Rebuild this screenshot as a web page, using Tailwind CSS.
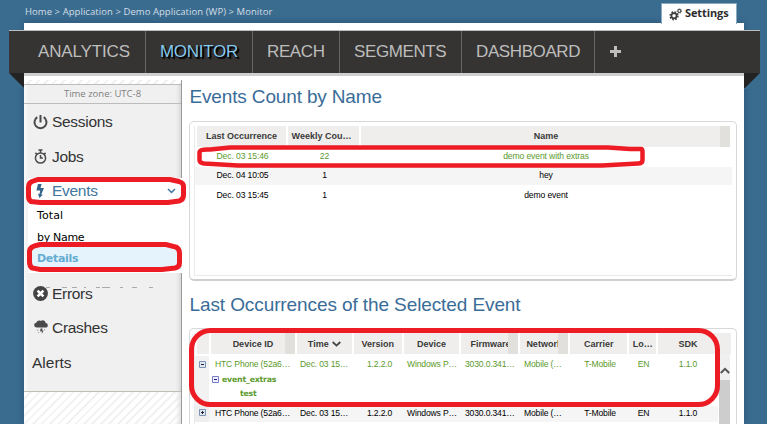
<!DOCTYPE html>
<html lang="en">
<head>
<meta charset="utf-8">
<title>Monitor</title>
<script src="https://cdn.jsdelivr.net/npm/@tailwindcss/browser@4"></script>
</head>
<body class="w-[767px] h-[424px] overflow-hidden bg-[#3a6c90] font-['Liberation_Sans',Arial,sans-serif]">
<div class="relative w-[767px] h-[424px] overflow-hidden flex flex-col">
  <header class="h-[23px] shrink-0 flex justify-between pl-[25px] pr-[30px]">
    <nav class="pt-[6px] h-[22px] text-[9.5px] leading-[12px] tracking-[0.06px] text-[#d3dde5] whitespace-nowrap font-['Open_Sans',sans-serif]">Home &gt; Application &gt; Demo Application (WP) &gt; Monitor</nav>
    <div class="relative z-10 mt-[3px] h-[21px] w-[76px] bg-white border border-b-0 border-[#8ba9bf] flex items-center pl-[7px] gap-[3px]">
      <svg class="w-[13px] h-[13px]" viewBox="0 0 13 13" fill="none" stroke="#3c3c3c"><circle cx="5" cy="7.8" r="2.6" stroke-width="1.7"/><circle cx="5" cy="7.8" r="3.9" stroke-width="1.5" stroke-dasharray="1.6 1.46"/><circle cx="10.4" cy="3" r="1.5" stroke-width="1.1"/><circle cx="10.4" cy="3" r="2.2" stroke-width=".8" stroke-dasharray=".9 .83"/></svg>
      <span class="text-[11px] leading-[14px] pb-[2px] font-bold text-[#2c2c2c] font-['Open_Sans',sans-serif] tracking-[-0.1px]">Settings</span>
    </div>
  </header>
  <main class="mx-[24px] w-[720px] h-[401px] bg-white flex flex-col shadow-[0_0_7px_rgba(20,50,80,0.45)]">
    <nav class="relative mt-[7px] -ml-[15px] w-[751px] h-[46px] shrink-0 bg-[#363432] border-t border-t-[#bdbdbd] flex text-[17px] leading-[20px] text-[#bdbdbd] whitespace-nowrap">
      <div class="w-[137px] border-r border-[#666] pl-[29px] pt-[11px] tracking-[-0.15px]">ANALYTICS</div>
      <div class="w-[107px] border-r border-[#666] pl-[14px] pt-[11px] text-[#86c9ee] tracking-[-0.3px] [text-shadow:1px_1px_1px_#000,2px_2px_1px_#000]">MONITOR</div>
      <div class="w-[87px] border-r border-[#666] pl-[14px] pt-[11px] tracking-[-0.4px]">REACH</div>
      <div class="w-[122px] border-r border-[#666] pl-[14px] pt-[11px] tracking-[-0.4px]">SEGMENTS</div>
      <div class="w-[133px] border-r border-[#666] pl-[14px] pt-[11px] tracking-[-0.4px]">DASHBOARD</div>
      <svg class="ml-[15px] mt-[15px] w-[11px] h-[11px]" viewBox="0 0 11 11"><path d="M0 5.5h11M5.500 0v11" stroke="#bdbdbd" stroke-width="3"/></svg>
      <div class="absolute left-[15px] top-[42px] w-[720px] h-[3px] bg-[#cfcfcf]"></div>
      <svg class="absolute left-0 top-[42px] w-[15px] h-[15px]" viewBox="0 0 15 15"><path d="M0 0h15v15H0z" fill="#3a6c90"/><path d="M0 0h15v15z" fill="#232323"/></svg>
      <svg class="absolute left-[735px] top-[42px] w-[16px] h-[16px]" viewBox="0 0 16 16"><path d="M0 0h16v16H0z" fill="#3a6c90"/><path d="M0 0h16L1 15H0z" fill="#232323"/></svg>
    </nav>
    <div class="flex h-[348px]">
      <aside class="mt-[4px] w-[158px] h-[344px] shrink-0 border-r border-[#999] bg-[#f0f0f0] text-[15.5px] leading-[18px] tracking-[-0.3px] text-[#333] shadow-[inset_4px_0_5px_-3px_#fff,inset_-4px_0_5px_-3px_#ccc] relative">
        <div class="h-[4px] bg-[repeating-linear-gradient(135deg,#fff_0_4px,#f0f0f0_4px_6px)]"></div>
        <div class="h-[20px] border-y border-[#bcbcbc] text-center text-[9.5px] leading-[17px] text-[#808080] tracking-[0px] font-['Open_Sans',sans-serif]">Time zone: UTC-8</div>
        <div class="flex items-center h-[36px] pl-[9px] gap-[4px]">
          <svg class="w-[15px] h-[16px]" viewBox="0 0 15 16" fill="none" stroke="#4a4a4a" stroke-width="2"><path d="M4.300 3.200a6 6 0 1 0 6.400 0M7.500 1v7.500"/></svg><span>Sessions</span></div>
        <div class="flex items-center h-[33px] pl-[10px] gap-[5px]">
          <svg class="w-[13px] h-[15px]" viewBox="0 0 13 15" fill="none" stroke="#4a4a4a" stroke-width="1.500"><circle cx="6.500" cy="9" r="5.100"/><path d="M6.500 6v3h2.400M4.500 .9h4M6.500 1v3M1.400 3.900l1.600 1.500M11.600 3.900l-1.500 1.500"/></svg><span>Jobs</span></div>
        <div class="relative -mr-px mt-[5px] ml-[4px] h-[95px] bg-white">
          <div class="flex items-center h-[25px] pl-[8px] text-[#4176a0]">
            <svg class="w-[8px] h-[14px] mr-[8px]" viewBox="0 0 8 14" fill="#34658b"><path d="M2 0h3.600L4.500 4H8L5.200 10.500l1.700.2L3.400 14 2 9.600l1.500.5L4.200 6.600H.4z"/></svg><span>Events</span>
            <svg class="ml-auto mr-[6px] w-[9px] h-[6px]" viewBox="0 0 9 6" fill="none" stroke="#4176a0" stroke-width="1.500"><path d="M1 1l3.500 3.500L8 1"/></svg></div>
          <div class="pl-[9px] pt-px text-[11px] leading-[24px] text-black font-['DejaVu_Sans',Verdana,sans-serif]">
            <div class="h-[22px] tracking-[0.1px]">Total</div>
            <div class="h-[21px] tracking-[-0.3px]">by Name</div>
            <div class="-ml-[9px] pl-[9px] h-[22px] leading-[23px] bg-[#e4f3fc] text-[#63acd3] font-bold tracking-[-0.3px]">Details</div>
          </div>
        </div>
        <div class="flex items-center h-[41px] pl-[9px] gap-[4px]">
          <svg class="w-[15px] h-[15px]" viewBox="0 0 15 15"><circle cx="7.500" cy="7.500" r="7.400" fill="#444"/><path d="M4.600 4.600l5.800 5.800m0-5.800l-5.800 5.800" stroke="#fff" stroke-width="2.600"/></svg><span>Errors</span></div>
        <div class="flex items-center h-[27px] pl-[10px] gap-[4px]">
          <svg class="w-[14px] h-[15px]" viewBox="0 0 14 15" fill="#4a4a4a"><path d="M3 7.500C-.8 7.500-.5 3 2.300 2.800 3 .8 5 .2 6.800.900 9-.5 11.500 1 11.600 3c3 .4 2.800 4.500.2 4.500z"/><path d="M6.500 8.500h2l-.3 2h1.300l-1.700 3.500.2-2.400H6.200zM3.500 9.500l1 .4-.8 1.200zM10 9l1 .4-.5 1zM4.500 12l.8.3-.6 1.200z"/></svg><span>Crashes</span></div>
        <div class="flex items-center h-[43px] pl-[8px]"><span class="tracking-[0px]">Alerts</span></div>
        <div class="mt-[7px] h-[33px] border-t border-[#bfbfb5] bg-[repeating-linear-gradient(135deg,#fff_0_4px,#f2f2f2_4px_6px)] shadow-[inset_-5px_0_5px_-3px_#ddd]"></div>
        <svg class="absolute left-[22px] top-[207px] w-[112px] h-[2px]" viewBox="0 0 112 2"><path d="M0 .5h4M16 .5h5M26 .5h5M38 .5h2M50 .5h4M56 .5h8M74 .5h3M86 .5h5M103 .5h4" stroke="#aaa"/></svg>
      </aside>
      <section class="pl-[7px] flex flex-col text-[8.6px] leading-[10px]">
        <h1 class="h-[45px] shrink-0 pt-[10px] pl-[0.5px] text-[19px] leading-[22px] text-[#3a6c98] tracking-[-0.15px] whitespace-nowrap">Events Count by Name</h1>
        <div class="w-[548px] h-[160px] shrink-0 rounded-[5px] border border-b-2 border-[#d8d8d8] border-b-[#cfcfcf] pt-[4px] px-[4px] pb-[3px]">
          <div class="h-full border-l border-b border-[#ebebeb] text-center">
            <div class="ml-[2px] flex gap-[2px] h-[21px] text-[9px] leading-[20px] font-bold text-[#3a3a3a] whitespace-nowrap">
              <div class="w-[89px] bg-[#efeeec]">Last Occurrence</div><div class="w-[71px] bg-[#efeeec] pr-[4px]">Weekly Cou…</div><div class="w-[369px] bg-[#efeeec] border-r-10 border-[#e1e0dc]"><span class="ml-[11px]">Name</span></div>
            </div>
            <div class="grid grid-cols-[95px_69px_374px] h-[20px] leading-[19px] text-[#5c9a2c] tracking-[-0.12px]"><span>Dec. 03 15:46</span><span>22</span><span>demo event with extras</span></div>
            <div class="grid grid-cols-[95px_69px_374px] h-[18px] leading-[17px] bg-[#f5f5f5] tracking-[-0.12px]"><span>Dec. 04 10:05</span><span>1</span><span>hey</span></div>
            <div class="grid grid-cols-[95px_69px_374px] h-[20px] leading-[20px] tracking-[-0.12px]"><span>Dec. 03 15:45</span><span>1</span><span>demo event</span></div>
          </div>
        </div>
        <h1 class="h-[47px] shrink-0 pt-[13px] pl-[0.5px] text-[19px] leading-[22px] text-[#3a6c98] tracking-[-0.1px] whitespace-nowrap">Last Occurrences of the Selected Event</h1>
        <div class="w-[548px] h-[110px] shrink-0 rounded-t-[5px] border border-b-0 border-[#d8d8d8] pt-[4px] px-[4px] flex">
          <div class="w-[524px] border-l border-[#ebebeb] whitespace-nowrap">
            <div class="ml-[2px] flex gap-[2px] h-[21px] text-[9px] leading-[22px] font-bold text-[#3a3a3a] text-center">
              <div class="w-[12px] bg-[#efeeec]"></div>
              <div class="w-[84px] bg-[#efeeec] border-r-10 border-[#e1e0dc]"><span class="ml-[10px]">Device ID</span></div>
              <div class="w-[55px] bg-[#efeeec] flex items-center justify-center gap-[3px]"><span>Time</span><svg class="w-[9px] h-[6px]" viewBox="0 0 9 6" fill="none" stroke="#444" stroke-width="1.800"><path d="M.7 1l3.800 3.600L8.300 1"/></svg></div>
              <div class="w-[48px] bg-[#efeeec]">Version</div>
              <div class="w-[56px] bg-[#efeeec]">Device</div>
              <div class="w-[57px] bg-[#efeeec] border-r-10 border-[#e1e0dc] text-left pl-[9px] overflow-hidden">Firmware</div>
              <div class="w-[48px] bg-[#efeeec] border-r-10 border-[#e1e0dc] text-left pl-[6px] overflow-hidden">Network</div>
              <div class="w-[57px] bg-[#efeeec]">Carrier</div>
              <div class="w-[27px] bg-[#efeeec]">Lo…</div>
              <div class="w-[60px] bg-[#efeeec]">SDK</div>
            </div>
            <div class="flex mt-[2px] h-[50px]">
              <div class="w-[15px] bg-[#f2f2f2] pt-[5px] pl-[4px]"><svg class="w-[7px] h-[7px]" viewBox="0 0 7 7"><path d="M.5.5h6v6h-6z" fill="#dfe7f3" stroke="#7e92b5"/><path d="M2 3.500h3" stroke="#223"/></svg></div>
              <div class="text-[#5c9a2c]">
                <div class="grid grid-cols-[85px_58px_54px_57px_58px_50px_58px_29px_60px] h-[18px] leading-[17px] text-left tracking-[-0.17px]"><span class="pl-[6px]">HTC Phone (52a6…</span><span class="pl-[6px]">Dec. 03 15…</span><span class="pl-[15px]">1.2.2.0</span><span class="pl-[1px]">Windows P…</span><span class="pl-[2px]">3030.0.341…</span><span class="pl-[3px]">Mobile (…</span><span class="text-center">T-Mobile</span><span class="text-center">EN</span><span class="text-center">1.1.0</span></div>
                <div class="font-['DejaVu_Sans',Verdana,sans-serif] font-bold text-[7.8px] leading-[14px] tracking-[-0.2px]">
                  <div class="flex items-center pl-[3px] gap-[3px] h-[11px]"><svg class="w-[7px] h-[7px]" viewBox="0 0 7 7"><path d="M.5.5h6v6h-6z" fill="#eef" stroke="#7a80c8"/><path d="M2 3.500h3" stroke="#228"/></svg><span>event_extras</span></div>
                  <div class="pl-[31px] pt-[2px]">test</div>
                </div>
              </div>
            </div>
            <div class="flex h-[16px] bg-[#f5f5f5]">
              <div class="w-[15px] bg-[#eee] pt-[3px] pl-[4px]"><svg class="w-[7px] h-[7px]" viewBox="0 0 7 7"><path d="M.5.5h6v6h-6z" fill="#dfe7f3" stroke="#7e92b5"/><path d="M2 3.500h3M3.500 2v3" stroke="#223"/></svg></div>
              <div class="grid grid-cols-[85px_58px_54px_57px_58px_50px_58px_29px_60px] leading-[15px] text-left tracking-[-0.17px]"><span class="pl-[6px]">HTC Phone (52a6…</span><span class="pl-[6px]">Dec. 03 15…</span><span class="pl-[15px]">1.2.2.0</span><span class="pl-[1px]">Windows P…</span><span class="pl-[2px]">3030.0.341…</span><span class="pl-[3px]">Mobile (…</span><span class="text-center">T-Mobile</span><span class="text-center">EN</span><span class="text-center">1.1.0</span></div>
            </div>
          </div>
          <div class="w-[13px]"><div class="h-[21px] bg-[#efeeec]"></div><div class="h-[26px] bg-[#f0f0f0] flex items-center justify-center pt-[6px] ml-px w-[11px]"><svg class="w-[10px] h-[7px]" viewBox="0 0 10 7" fill="none" stroke="#555" stroke-width="2"><path d="M.8 6L5 1.800 9.200 6"/></svg></div><div class="h-[60px] ml-px w-[11px] bg-[#cdcdcd]"></div></div>
        </div>
      </section>
    </div>
  </main>
  <svg class="absolute inset-0 w-[767px] h-[424px] pointer-events-none" viewBox="0 0 767 424" fill="none" stroke="#ed1c24" stroke-width="5">
    <path d="M38 179.500H170L179 181.500Q183.500 183 183.500 186V195Q183.500 200 179 201L168 202.500H40L31 201.500Q28.500 200 28.500 196V187Q28.500 183 32 181.500Z"/>
    <path d="M40 244.500H166L176 247Q179.500 249 179.500 253V263Q179.500 267 175 268L162 269.500H40L32 268Q29.500 266 29.500 262V251Q30 247 36 245.500Z"/>
    <path d="M230 147.500H608L630 149H641Q642.500 149 642.500 152V160Q642.500 163.500 638 163.500L602 165.500H238L204 163.500Q199.500 163 199.500 160V152Q200 149 210 149.500Z" stroke-width="4.500"/>
    <rect x="191.500" y="330.500" width="526" height="74" rx="19"/>
  </svg>
</div>
</body>
</html>
